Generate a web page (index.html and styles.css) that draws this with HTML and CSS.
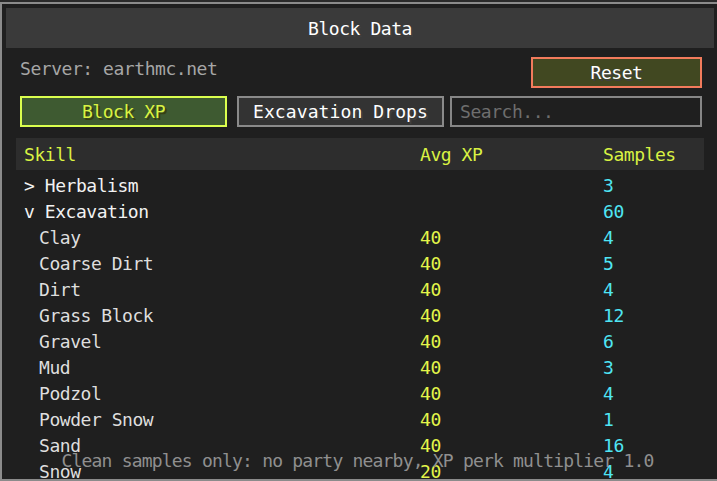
FILE: index.html
```html
<!DOCTYPE html>
<html lang="en">
<head>
    <meta charset="UTF-8">
    <title>Block Data</title>
    <link rel="stylesheet" href="styles.css">
</head>
<body>
    <div class="panel">
        <div class="title">Block Data</div>
        <div class="top-row">
            <span class="server">Server: earthmc.net</span>
            <button class="reset" type="button">Reset</button>
        </div>
        <div class="tabs">
            <button class="tab active" type="button">Block XP</button>
            <button class="tab" type="button">Excavation Drops</button>
            <input class="search" type="text" placeholder="Search...">
        </div>
        <div class="table">
            <div class="row head">
                <span>Skill</span>
                <span>Avg XP</span>
                <span>Samples</span>
            </div>
            <div class="row group">
                <span>&gt; Herbalism</span>
                <span class="avg"></span>
                <span class="count">3</span>
            </div>
            <div class="row group">
                <span>v Excavation</span>
                <span class="avg"></span>
                <span class="count">60</span>
            </div>
            <div class="row child">
                <span>Clay</span><span class="avg">40</span><span class="count">4</span>
            </div>
            <div class="row child">
                <span>Coarse Dirt</span><span class="avg">40</span><span class="count">5</span>
            </div>
            <div class="row child">
                <span>Dirt</span><span class="avg">40</span><span class="count">4</span>
            </div>
            <div class="row child">
                <span>Grass Block</span><span class="avg">40</span><span class="count">12</span>
            </div>
            <div class="row child">
                <span>Gravel</span><span class="avg">40</span><span class="count">6</span>
            </div>
            <div class="row child">
                <span>Mud</span><span class="avg">40</span><span class="count">3</span>
            </div>
            <div class="row child">
                <span>Podzol</span><span class="avg">40</span><span class="count">4</span>
            </div>
            <div class="row child">
                <span>Powder Snow</span><span class="avg">40</span><span class="count">1</span>
            </div>
            <div class="row child">
                <span>Sand</span><span class="avg">40</span><span class="count">16</span>
            </div>
            <div class="row child">
                <span>Snow</span><span class="avg">20</span><span class="count">4</span>
            </div>
        </div>
        <div class="footer">Clean samples only: no party nearby, XP perk multiplier 1.0</div>
    </div>
</body>
</html>
```

FILE: styles.css
```css
*{
    box-sizing: border-box;
}
body{
    margin: 0;
    padding: 0;
    background-color: #2a2a2a;
    font-family: "DejaVu Sans Mono", monospace;
    font-size: 18px;
    letter-spacing: -0.45px;
    overflow: hidden;
}
.panel{
    margin-top: 2px;
    width: 717px;
    height: 479px;
    background-color: #1f1f1f;
    border-top: 2px solid #8b8b8b;
    border-left: 2px solid #8b8b8b;
    border-bottom: 2px solid #8b8b8b;
    padding: 4px 3px 0 4px;
    position: relative;
    overflow: hidden;
}
.title{
    width: 708px;
    height: 40px;
    background-color: #3a3a3a;
    color: #fff;
    display: flex;
    justify-content: center;
    align-items: center;
    text-shadow: 2px 2px 0 #3f3f3f;
}
.top-row{
    display: flex;
    justify-content: space-between;
    align-items: center;
    margin-top: 9px;
    padding: 0 12px 0 14px;
    height: 31px;
}
.server{
    color: #a6a6a6;
    position: relative;
    top: -4px;
}
button, input{
    font-family: inherit;
    font-size: inherit;
    letter-spacing: inherit;
    margin: 0;
    outline: none;
}
.reset{
    width: 171px;
    height: 31px;
    background-color: #414821;
    border: 2px solid #f27b5c;
    color: #fff;
    text-shadow: 2px 2px 0 #3f3f3f;
    padding: 0;
}
.tabs{
    display: flex;
    margin-top: 8px;
    padding: 0 12px 0 14px;
    height: 31px;
}
.tab{
    width: 208px;
    height: 31px;
    background-color: #333;
    border: 2px solid #8a8a8a;
    color: #fff;
    text-shadow: 2px 2px 0 #3f3f3f;
    padding: 0;
    margin-right: 10px;
}
.tab + .tab{
    margin-right: 6px;
    letter-spacing: 0.1px;
}
.tab.active{
    background-color: #3e5a31;
    border-color: #dbff4e;
    color: #d9f243;
    text-shadow: 2px 2px 0 #364010;
}
.search{
    flex: 1;
    height: 31px;
    background-color: #1f1f1f;
    border: 2px solid #868686;
    color: #ddd;
    padding: 0 8px;
}
.search::placeholder{
    color: #6e6e6e;
}
.table{
    margin-top: 11px;
    margin-left: 10px;
    width: 688px;
}
.row{
    display: grid;
    grid-template-columns: 396px 183px 1fr;
    align-items: center;
    height: 26px;
    padding-left: 8px;
}
.row.head{
    height: 32px;
    background-color: #2d2d2d;
    color: #d9f243;
    margin-bottom: 2px;
}
.group{
    color: #f2f2f2;
}
.child{
    color: #dedede;
}
.child span:first-child{
    padding-left: 15px;
}
.avg{
    color: #e4f54a;
}
.count{
    color: #4fe5f4;
}
.footer{
    position: absolute;
    left: 0;
    right: 4px;
    top: 446px;
    text-align: center;
    color: #8f8f8f;
    letter-spacing: -0.8px;
}
```
